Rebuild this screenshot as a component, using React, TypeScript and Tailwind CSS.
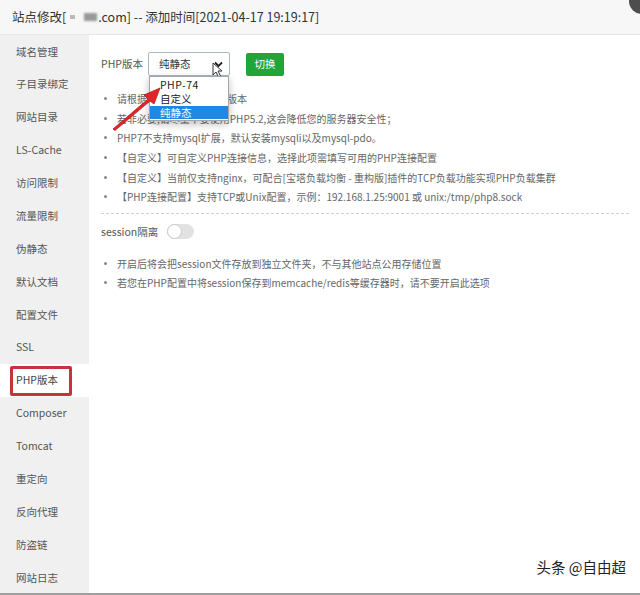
import React from "react";

const menu = [
  "域名管理",
  "子目录绑定",
  "网站目录",
  "LS-Cache",
  "访问限制",
  "流量限制",
  "伪静态",
  "默认文档",
  "配置文件",
  "SSL",
  "PHP版本",
  "Composer",
  "Tomcat",
  "重定向",
  "反向代理",
  "防盗链",
  "网站日志",
];

const phpTips = [
  "请根据您的程序需求选择版本",
  "若非必要,请尽量不要使用PHP5.2,这会降低您的服务器安全性；",
  "PHP7不支持mysql扩展，默认安装mysqli以及mysql-pdo。",
  "【自定义】可自定义PHP连接信息，选择此项需填写可用的PHP连接配置",
  "【自定义】当前仅支持nginx，可配合[宝塔负载均衡 - 重构版]插件的TCP负载功能实现PHP负载集群",
  "【PHP连接配置】支持TCP或Unix配置，示例：192.168.1.25:9001 或 unix:/tmp/php8.sock",
];

const sessionTips = [
  "开启后将会把session文件存放到独立文件夹，不与其他站点公用存储位置",
  "若您在PHP配置中将session保存到memcache/redis等缓存器时，请不要开启此选项",
];

function Tip({ text }: { text: string }) {
  return (
    <li className="flex h-[19.6px] items-center">
      <span className="ml-[3px] mr-[10px] h-[3px] w-[3px] rounded-full bg-[#888]" />
      <span className="whitespace-nowrap">{text}</span>
    </li>
  );
}

export default function App() {
  return (
    <div
      className="relative h-[595px] w-[640px] overflow-hidden bg-white text-[#555]"
      style={{ fontFamily: '"Noto Sans CJK SC", "Noto Sans", sans-serif' }}
    >
      {/* title bar */}
      <div className="flex h-[35px] items-center border-b border-[#e6e6e6] bg-[#f7f7f7] pl-[12px] text-[12.5px] text-[#333]">
        <span>站点修改[</span>
        <span className="ml-[4px] inline-block h-[4px] w-[5px] bg-[#bbb] blur-[0.5px]" />
        <span className="ml-[9px] inline-block h-[8px] w-[13px] bg-[#999] blur-[1px]" />
        <span className="ml-[1px]">.com] -- 添加时间[2021-04-17 19:19:17]</span>
        <div className="absolute right-[-15px] top-[-12px] h-[26px] w-[26px] rounded-full bg-[#4d4d4d]" />
      </div>

      <div className="flex h-[558px]">
        {/* side menu */}
        <div className="w-[89px] shrink-0 bg-[#f0f0f0]">
          {menu.map((item) => {
            const active = item === "PHP版本";
            return (
              <div
                key={item}
                className={`relative flex h-[32.875px] items-center pl-[16px] text-[10.5px] ${
                  active ? "bg-white text-[#444]" : "text-[#555]"
                }`}
              >
                {item}
                {active && (
                  <span className="absolute left-[10px] top-[2px] h-[30px] w-[62px] rounded-[2px] border-[3px] border-[#c7333d]" />
                )}
              </div>
            );
          })}
        </div>

        {/* content */}
        <div className="relative flex-1 pl-[12px] pr-[11px] pt-[17px] text-[10px] text-[#666]">
          <div className="flex items-center">
            <span className="text-[10.5px] text-[#555]">PHP版本</span>
            <div className="relative ml-[5px] flex h-[24px] w-[82px] items-center rounded-[2px] border border-[#aab8c6] pl-[10px] text-[10.5px] text-[#333]">
              纯静态
              <svg
                className="absolute right-[6px] top-[8px]"
                width="9"
                height="7"
                viewBox="0 0 9 7"
              >
                <path d="M1 1.5 L4.5 5 L8 1.5" fill="none" stroke="#222" strokeWidth="1.8" />
              </svg>
              <svg
                className="absolute left-[63px] top-[9px]"
                width="11"
                height="16"
                viewBox="0 0 11 16"
              >
                <path
                  d="M1 1 L1 13 L4 10 L6.5 15 L8.5 14 L6 9 L10 9 Z"
                  fill="#fff"
                  stroke="#333"
                  strokeWidth="1"
                  strokeLinejoin="round"
                />
              </svg>
              {/* open options */}
              <div className="absolute left-[0px] top-[23px] z-10 w-[80px] border border-[#a5a5a5] bg-white py-[1px] text-[10.5px] text-[#222] shadow-[0_3px_8px_rgba(0,0,0,0.25)]">
                <div className="flex h-[14px] items-center pl-[10px] tracking-[0.5px]">PHP-74</div>
                <div className="flex h-[14px] items-center pl-[10px]">自定义</div>
                <div className="flex h-[13px] items-center bg-[#1e88e5] pl-[10px] text-white">纯静态</div>
              </div>
            </div>
            <button className="ml-[16px] h-[23px] w-[38px] rounded-[2px] bg-[#20a53a] text-[10.5px] text-white">
              切换
            </button>
          </div>

          <ul className="mt-[13px]">
            {phpTips.map((t) => (
              <Tip key={t} text={t} />
            ))}
          </ul>

          <div className="mt-[6px] border-t border-dashed border-[#d0d0d0]" />

          <div className="mt-[10px] flex items-center">
            <span className="text-[10.5px] text-[#555]">session隔离</span>
            <div className="ml-[9px] flex h-[15px] w-[27px] items-center rounded-full bg-[#e2e2e2]">
              <span className="h-[15px] w-[15px] rounded-full border border-[#c8c8c8] bg-white" />
            </div>
          </div>

          <ul className="mt-[14px]">
            {sessionTips.map((t) => (
              <Tip key={t} text={t} />
            ))}
          </ul>

          {/* arrow annotation */}
          <svg
            className="absolute left-[21px] top-[50px] z-20"
            width="52"
            height="46"
            viewBox="0 0 52 46"
          >
            <path
              d="M3 44 L38 14 L34 10 L50 3 L44 19 L40 16 L5 45.5 Z"
              fill="#e1262a"
              stroke="#b81c20"
              strokeWidth="0.8"
              strokeLinejoin="round"
            />
          </svg>

          <div
            className="absolute bottom-[15px] right-[14px] text-[14.5px] text-[#222]"
            style={{ textShadow: "0 0 2px #fff, 0 0 2px #fff" }}
          >
            头条 @自由超
          </div>
        </div>
      </div>

      <div className="h-[2px] bg-[#9e9e9e]" />
    </div>
  );
}
